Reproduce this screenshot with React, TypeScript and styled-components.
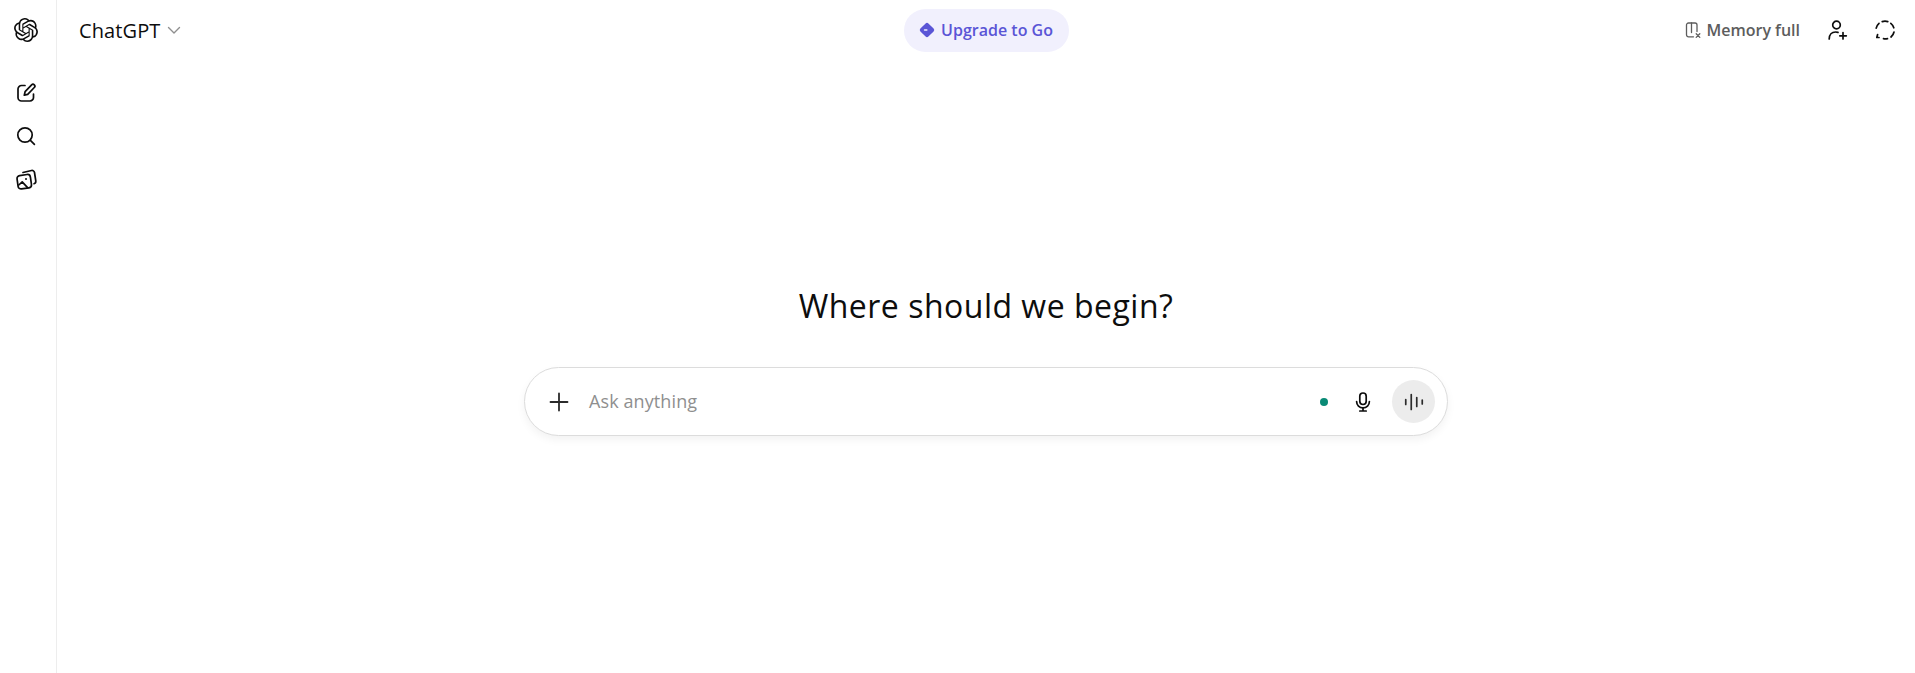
import React from "react";
import styled, { createGlobalStyle } from "styled-components";

const Global = createGlobalStyle`
  html, body { margin: 0; padding: 0; height: 100%; background: #fff; }
  #root { height: 100%; }
  * { box-sizing: border-box; }
  body { font-family: "Open Sans", "Noto Sans", "Liberation Sans", sans-serif; color: #0d0d0d; overflow: hidden; }
`;

const Page = styled.div`
  display: flex;
  width: 1915px;
  height: 673px;
`;

const Rail = styled.aside`
  width: 57px;
  flex: none;
  border-right: 1px solid #ededed;
  display: flex;
  flex-direction: column;
  align-items: center;
  padding: 18px 5px 0 0;
`;

const RailLogo = styled.div`
  width: 24px;
  height: 24px;
  margin-bottom: 39px;
  display: flex;
`;

const RailIcon = styled.div`
  width: 24px;
  height: 24px;
  margin-bottom: 19px;
  display: flex;
  align-items: center;
  justify-content: center;
`;

const Main = styled.main`
  flex: 1;
  display: flex;
  flex-direction: column;
  min-width: 0;
`;

const Header = styled.header`
  height: 60px;
  flex: none;
  display: grid;
  grid-template-columns: 1fr auto 1fr;
  align-items: center;
  padding: 0 20px;
`;

const ModelPicker = styled.div`
  display: flex;
  align-items: center;
  gap: 6px;
  padding-left: 2px;
  font-size: 20px;
  letter-spacing: 0.1px;
  color: #0d0d0d;
`;

const UpgradePill = styled.div`
  height: 43px;
  width: 165px;
  border-radius: 22px;
  background: #f1f0fd;
  color: #5a55d6;
  font-size: 16px;
  font-weight: 600;
  display: flex;
  align-items: center;
  justify-content: center;
  gap: 6px;
`;

const Actions = styled.div`
  display: flex;
  align-items: center;
  justify-content: flex-end;
  margin-right: -2px;
`;

const MemoryLabel = styled.div`
  display: flex;
  align-items: center;
  gap: 6px;
  font-size: 16px;
  font-weight: 600;
  color: #5d5d5d;
  margin-right: 26px;
`;

const ActionIcon = styled.div<{ $gap?: number }>`
  width: 24px;
  height: 24px;
  display: flex;
  align-items: center;
  justify-content: center;
  margin-left: ${(p) => p.$gap ?? 0}px;
`;

const Center = styled.section`
  flex: 1;
  display: flex;
  flex-direction: column;
  align-items: center;
  padding-top: 222px;
`;

const Title = styled.h1`
  margin: 0 0 37px;
  font-size: 32px;
  line-height: 48px;
  font-weight: 400;
  letter-spacing: 0.5px;
  color: #0d0d0d;
`;

const Composer = styled.div`
  width: 924px;
  height: 69px;
  border: 1px solid #dcdcdc;
  border-radius: 35px;
  background: #fff;
  box-shadow: 0 4px 8px rgba(0, 0, 0, 0.05);
  display: flex;
  align-items: center;
  padding: 0 12px 0 22px;
`;

const PlusButton = styled.div`
  width: 24px;
  height: 24px;
  display: flex;
  align-items: center;
  justify-content: center;
  margin-right: 18px;
`;

const Placeholder = styled.div`
  flex: 1;
  font-size: 18px;
  letter-spacing: 0.1px;
  padding-bottom: 2px;
  color: #8f8f8f;
`;

const StatusDot = styled.span`
  width: 8px;
  height: 8px;
  border-radius: 50%;
  background: #0a8a76;
  margin-right: 23px;
`;

const MicButton = styled.div`
  width: 24px;
  height: 24px;
  display: flex;
  align-items: center;
  justify-content: center;
  margin-right: 17px;
`;

const VoiceButton = styled.div`
  width: 43px;
  height: 43px;
  border-radius: 50%;
  background: #ececec;
  display: flex;
  align-items: center;
  justify-content: center;
`;

const OpenAILogo = () => (
  <svg width="24" height="24" viewBox="0 0 24 24" fill="#0d0d0d">
    <path d="M22.2819 9.8211a5.9847 5.9847 0 0 0-.5157-4.9108 6.0462 6.0462 0 0 0-6.5098-2.9A6.0651 6.0651 0 0 0 4.9807 4.1818a5.9847 5.9847 0 0 0-3.9977 2.9 6.0462 6.0462 0 0 0 .7427 7.0966 5.98 5.98 0 0 0 .511 4.9107 6.051 6.051 0 0 0 6.5146 2.9001A5.9847 5.9847 0 0 0 13.2599 24a6.0557 6.0557 0 0 0 5.7718-4.2058 5.9894 5.9894 0 0 0 3.9977-2.9001 6.0557 6.0557 0 0 0-.7475-7.0729zm-9.022 12.6081a4.4755 4.4755 0 0 1-2.8764-1.0408l.1419-.0804 4.7783-2.7582a.7948.7948 0 0 0 .3927-.6813v-6.7369l2.02 1.1686a.071.071 0 0 1 .038.052v5.5826a4.504 4.504 0 0 1-4.4945 4.4944zm-9.6607-4.1254a4.4708 4.4708 0 0 1-.5346-3.0137l.142.0852 4.783 2.7582a.7712.7712 0 0 0 .7806 0l5.8428-3.3685v2.3324a.0804.0804 0 0 1-.0332.0615L9.74 19.9502a4.4992 4.4992 0 0 1-6.1408-1.6464zM2.3408 7.8956a4.485 4.485 0 0 1 2.3655-1.9728V11.6a.7664.7664 0 0 0 .3879.6765l5.8144 3.3543-2.0201 1.1685a.0757.0757 0 0 1-.071 0l-4.8303-2.7865A4.504 4.504 0 0 1 2.3408 7.872zm16.5963 3.8558L13.1038 8.364 15.1192 7.2a.0757.0757 0 0 1 .071 0l4.8303 2.7913a4.4944 4.4944 0 0 1-.6765 8.1042v-5.6772a.79.79 0 0 0-.407-.667zm2.0107-3.0231l-.142-.0852-4.7735-2.7818a.7759.7759 0 0 0-.7854 0L9.409 9.2297V6.8974a.0662.0662 0 0 1 .0284-.0615l4.8303-2.7866a4.4992 4.4992 0 0 1 6.6802 4.66zM8.3065 12.863l-2.02-1.1638a.0804.0804 0 0 1-.038-.0567V6.0742a4.4992 4.4992 0 0 1 7.3757-3.4537l-.142.0805L8.704 5.459a.7948.7948 0 0 0-.3927.6813zm1.0976-2.3654l2.602-1.4998 2.6069 1.4998v2.9994l-2.5974 1.4997-2.6067-1.4997Z" />
  </svg>
);

const stroke = { fill: "none", stroke: "#0d0d0d", strokeWidth: 1.7, strokeLinecap: "round", strokeLinejoin: "round" } as const;

const EditIcon = () => (
  <svg width="22" height="22" viewBox="0 0 22 22" {...stroke}>
    <path d="M10 3.500H6.500A3.500 3.500 0 0 0 3 7v8.500A3.500 3.500 0 0 0 6.500 19H15a3.500 3.500 0 0 0 3.500-3.500V12" />
    <path d="M16.600 2.800a1.900 1.900 0 0 1 2.700 2.700l-6.600 6.900-3.400.8.800-3.500z" />
  </svg>
);

const SearchIcon = () => (
  <svg width="22" height="22" viewBox="0 0 22 22" {...stroke}>
    <circle cx="10" cy="10" r="7.200" />
    <path d="M15.400 15.400 19.400 19.400" />
  </svg>
);

const LibraryIcon = () => (
  <svg width="22" height="22" viewBox="0 0 22 22" {...stroke}>
    <rect x="2.500" y="7" width="13.500" height="13.500" rx="3" transform="rotate(-8 9 13.700)" />
    <path d="M8 4.500 16.500 2.500a2.500 2.500 0 0 1 3 2l1.300 8.500a2.500 2.500 0 0 1-1.800 2.700" />
    <circle cx="11" cy="11" r="1" fill="#0d0d0d" stroke="none" />
    <path d="M3.800 17 7.200 13.800l5.400 5.800" />
  </svg>
);

const Chevron = () => (
  <svg width="16" height="16" viewBox="0 0 16 16" fill="none" stroke="#8f8f8f" strokeWidth="1.400" strokeLinecap="round" strokeLinejoin="round">
    <path d="M2.500 5.500 8 11l5.500-5.500" />
  </svg>
);

const GoDiamond = () => (
  <svg width="16" height="16" viewBox="0 0 16 16">
    <path fillRule="evenodd" fill="#5a55d6" d="M8 .8c.5 0 1 .2 1.400.6l5.200 5.200a2 2 0 0 1 0 2.800l-5.200 5.200a2 2 0 0 1-2.800 0L1.400 9.400a2 2 0 0 1 0-2.800L6.600 1.400C7 1 7.500.8 8 .8zM5.600 7.200a.8.8 0 0 0 0 1.600h2.200a.8.8 0 0 0 0-1.600z" />
  </svg>
);

const MemoryIcon = () => (
  <svg width="16" height="18" viewBox="0 0 16 18" fill="none" stroke="#5d5d5d" strokeWidth="1.300" strokeLinecap="round" strokeLinejoin="round">
    <path d="M8.500 15.800H3.500A2 2 0 0 1 1.500 13.800V4a2 2 0 0 1 2-2h6.500a2 2 0 0 1 2 2v6.500" />
    <path d="M6.500 2v9.500" />
    <path d="M11.200 12.800 14.800 16.400M14.800 12.800 11.200 16.400" />
  </svg>
);

const AddPersonIcon = () => (
  <svg width="22" height="22" viewBox="0 0 22 22" {...stroke}>
    <circle cx="9.500" cy="6" r="3.800" />
    <path d="M2.200 20c0-4.500 2.700-7 6.300-7 .9 0 1.700.1 2.500.4" />
    <path d="M16 13.500v6.500M12.800 16.800h6.500" />
  </svg>
);

const DashedChatIcon = () => (
  <svg width="22" height="22" viewBox="0 0 22 22" {...stroke}>
    <path d="M8.200 2.600a8.800 8.800 0 0 1 5.600 0" />
    <path d="M16.800 4.300a8.800 8.800 0 0 1 3 4.500" />
    <path d="M20 13a8.800 8.800 0 0 1-3 5" />
    <path d="M13.500 19.600a8.800 8.800 0 0 1-4 .1" />
    <path d="M5 18.500H2.800L3.600 15.500" />
    <path d="M2.200 9.200a8.800 8.800 0 0 1 2.800-4.900" />
  </svg>
);

const PlusIcon = () => (
  <svg width="20" height="20" viewBox="0 0 20 20" fill="none" stroke="#2b2b2b" strokeWidth="1.800" strokeLinecap="round">
    <path d="M10 1.500v17M1.500 10h17" />
  </svg>
);

const MicIcon = () => (
  <svg width="16" height="20" viewBox="0 0 16 20" {...stroke}>
    <rect x="4.800" y="1" width="6.400" height="11.500" rx="3.200" />
    <path d="M1.600 9.500a6.400 6.400 0 0 0 12.800 0" />
    <path d="M8 16v3M4.800 19h6.400" />
  </svg>
);

const WaveIcon = () => (
  <svg width="20" height="20" viewBox="0 0 20 20" fill="none" stroke="#2b2b2b" strokeWidth="1.700" strokeLinecap="round">
    <path d="M1.750 7.500v5M7.250 2.500v15M12.750 5.500v9M18.250 8v4" />
  </svg>
);

export default function App() {
  return (
    <>
      <Global />
      <Page>
        <Rail>
          <RailLogo><OpenAILogo /></RailLogo>
          <RailIcon><EditIcon /></RailIcon>
          <RailIcon><SearchIcon /></RailIcon>
          <RailIcon><LibraryIcon /></RailIcon>
        </Rail>
        <Main>
          <Header>
            <ModelPicker>ChatGPT <Chevron /></ModelPicker>
            <UpgradePill><GoDiamond />Upgrade to Go</UpgradePill>
            <Actions>
              <MemoryLabel><MemoryIcon />Memory full</MemoryLabel>
              <ActionIcon><AddPersonIcon /></ActionIcon>
              <ActionIcon $gap={23}><DashedChatIcon /></ActionIcon>
            </Actions>
          </Header>
          <Center>
            <Title>Where should we begin?</Title>
            <Composer>
              <PlusButton><PlusIcon /></PlusButton>
              <Placeholder>Ask anything</Placeholder>
              <StatusDot />
              <MicButton><MicIcon /></MicButton>
              <VoiceButton><WaveIcon /></VoiceButton>
            </Composer>
          </Center>
        </Main>
      </Page>
    </>
  );
}
